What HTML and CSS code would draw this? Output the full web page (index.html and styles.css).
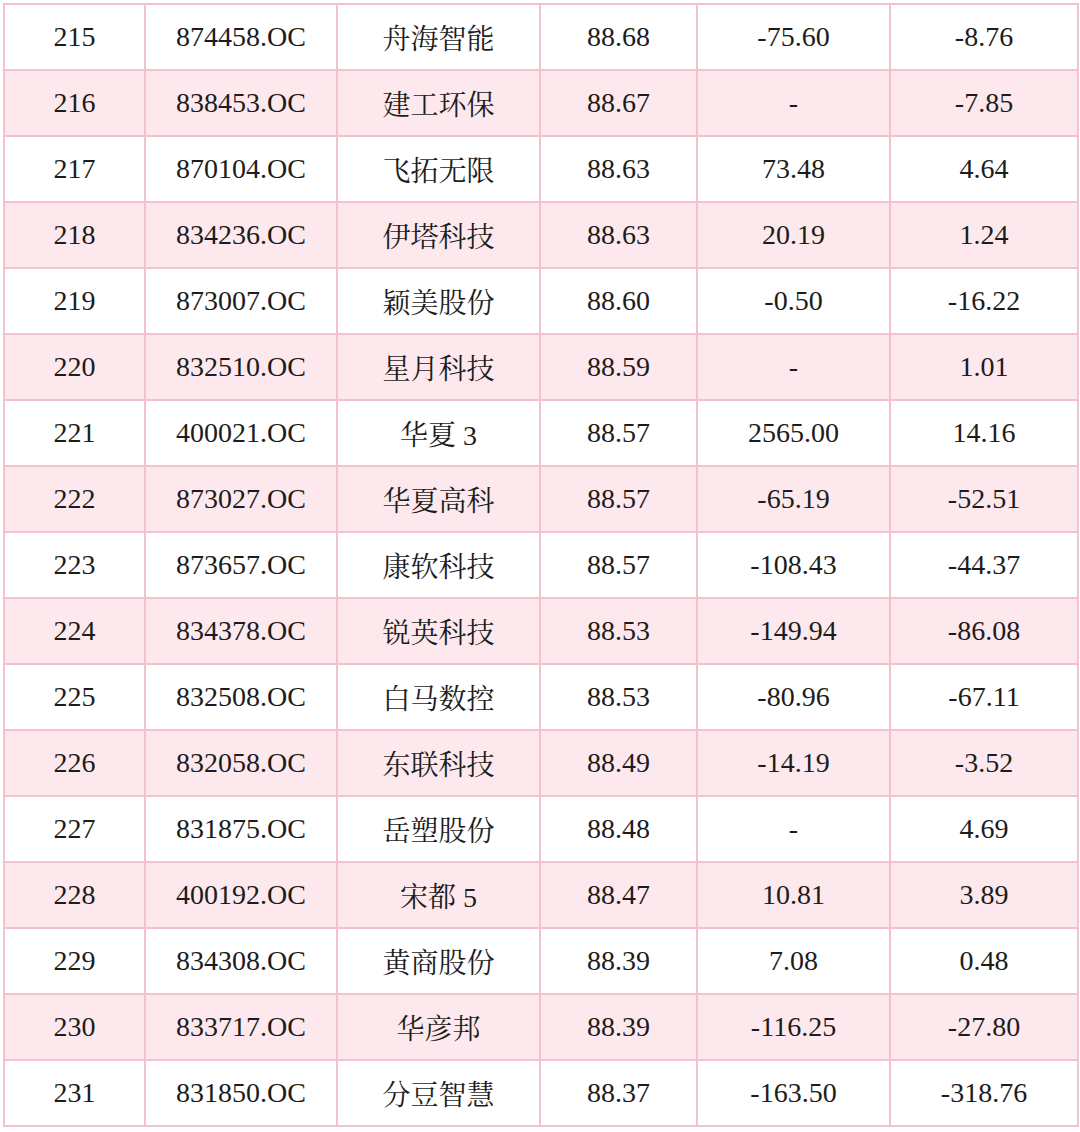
FILE: index.html
```html
<!DOCTYPE html>
<html lang="zh-CN">
<head>
<meta charset="utf-8">
<link rel="stylesheet" href="styles.css">
<title>表格</title>
</head>
<body>
<div class="wrap">
<table class="grid">
<colgroup>
<col class="c1"><col class="c2"><col class="c3"><col class="c4"><col class="c5"><col class="c6">
</colgroup>
<tbody>
<tr><td>215</td><td>874458.OC</td><td>舟海智能</td><td>88.68</td><td>-75.60</td><td>-8.76</td></tr>
<tr><td>216</td><td>838453.OC</td><td>建工环保</td><td>88.67</td><td>-</td><td>-7.85</td></tr>
<tr><td>217</td><td>870104.OC</td><td>飞拓无限</td><td>88.63</td><td>73.48</td><td>4.64</td></tr>
<tr><td>218</td><td>834236.OC</td><td>伊塔科技</td><td>88.63</td><td>20.19</td><td>1.24</td></tr>
<tr><td>219</td><td>873007.OC</td><td>颖美股份</td><td>88.60</td><td>-0.50</td><td>-16.22</td></tr>
<tr><td>220</td><td>832510.OC</td><td>星月科技</td><td>88.59</td><td>-</td><td>1.01</td></tr>
<tr><td>221</td><td>400021.OC</td><td>华夏 3</td><td>88.57</td><td>2565.00</td><td>14.16</td></tr>
<tr><td>222</td><td>873027.OC</td><td>华夏高科</td><td>88.57</td><td>-65.19</td><td>-52.51</td></tr>
<tr><td>223</td><td>873657.OC</td><td>康软科技</td><td>88.57</td><td>-108.43</td><td>-44.37</td></tr>
<tr><td>224</td><td>834378.OC</td><td>锐英科技</td><td>88.53</td><td>-149.94</td><td>-86.08</td></tr>
<tr><td>225</td><td>832508.OC</td><td>白马数控</td><td>88.53</td><td>-80.96</td><td>-67.11</td></tr>
<tr><td>226</td><td>832058.OC</td><td>东联科技</td><td>88.49</td><td>-14.19</td><td>-3.52</td></tr>
<tr><td>227</td><td>831875.OC</td><td>岳塑股份</td><td>88.48</td><td>-</td><td>4.69</td></tr>
<tr><td>228</td><td>400192.OC</td><td>宋都 5</td><td>88.47</td><td>10.81</td><td>3.89</td></tr>
<tr><td>229</td><td>834308.OC</td><td>黄商股份</td><td>88.39</td><td>7.08</td><td>0.48</td></tr>
<tr><td>230</td><td>833717.OC</td><td>华彦邦</td><td>88.39</td><td>-116.25</td><td>-27.80</td></tr>
<tr><td>231</td><td>831850.OC</td><td>分豆智慧</td><td>88.37</td><td>-163.50</td><td>-318.76</td></tr>
</tbody>
</table>
</div>
</body>
</html>
```

FILE: styles.css
```css
html, body {
  margin: 0;
  padding: 0;
  background: #ffffff;
}
.wrap {
  padding: 3px 3px 0 3px;
}
.grid {
  width: 1074px;
  border-collapse: collapse;
  table-layout: fixed;
  border-left: 2px solid #e9a6b5;
  border-right: 2px solid #eeb4c1;
  border-top: 2px solid #f0bcc6;
  border-bottom: 2px solid #f0bcc6;
  font-family: "Liberation Serif", "Noto Serif CJK SC", "Noto Sans CJK SC", serif;
  font-size: 28px;
  color: #1c1c1c;
}
.c1 { width: 141px; }
.c2 { width: 192px; }
.c3 { width: 203px; }
.c4 { width: 157px; }
.c5 { width: 193px; }
.c6 { width: 188px; }
.grid td {
  height: 64px;
  padding: 0;
  text-align: center;
  vertical-align: middle;
  border: 2px solid #f2c3cc;
  white-space: nowrap;
}
.grid tr:nth-child(even) td {
  background: #fde9ed;
}
```
